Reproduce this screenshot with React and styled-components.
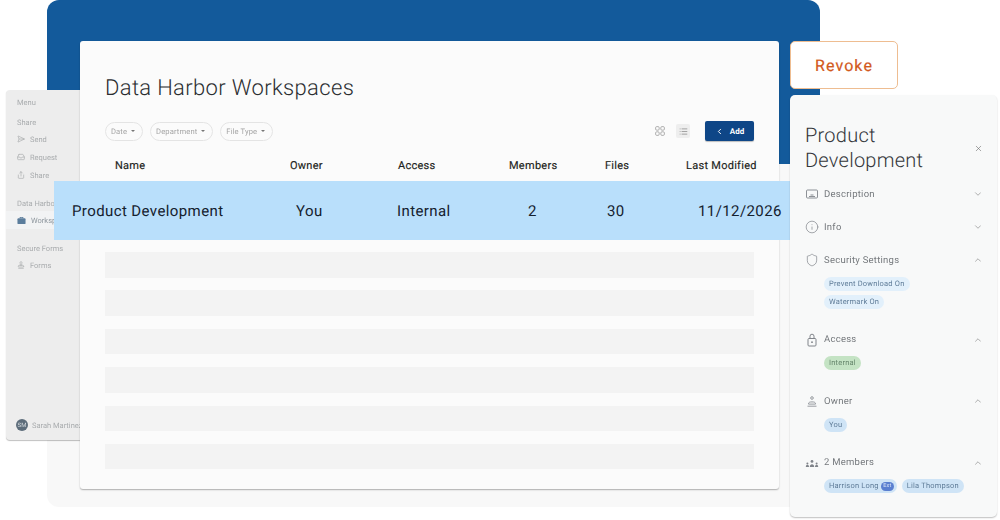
import React from "react";
import styled, { createGlobalStyle } from "styled-components";
import { ChevronDown, ChevronLeft, ChevronUp, Info, Inbox, List, SendHorizontal, Share, Shield, Stamp, X } from "lucide-react";

const Global = createGlobalStyle`
  html, body { margin: 0; padding: 0; background: #fff; }
  body { font-family: Roboto, "Liberation Sans", sans-serif; overflow: hidden; text-rendering: geometricPrecision; }
`;

const Canvas = styled.div`position: relative; width: 1000px; height: 520px; overflow: hidden; background: #fff;`;

const Backdrop = styled.div`
  position: absolute; left: 47px; top: 0; width: 773px; height: 507px;
  border-radius: 12px;
  background: linear-gradient(#135a9b 0, #135a9b 164px, #f8f8f8 164px);
`;

const Sidebar = styled.aside`
  position: absolute; left: 6px; top: 90px; width: 74px; height: 350px;
  display: flex; flex-direction: column;
  padding: 6px 0 9px 0; box-sizing: border-box;
  background: #ededed; border-radius: 4px 0 0 4px;
  box-shadow: 0 1px 1px rgba(0,0,0,.25);
  overflow: hidden; color: #a9acae; font-size: 7.5px; filter: blur(.35px);
`;
const SideHeading = styled.div`
  height: 14px; line-height: 14px; padding-left: 11px; white-space: nowrap;
  margin-top: ${p => p.$gap || 0}px;
`;
const SideItem = styled.div`
  height: 18px; display: flex; align-items: center; gap: 5px; padding-left: 11px;
  white-space: nowrap; background: ${p => (p.$active ? "#f2f3f4" : "transparent")};
  color: ${p => (p.$active ? "#8f979e" : "#a9acae")};
  svg { flex: none; }
`;
const SideFooter = styled.div`
  margin-top: auto; display: flex; align-items: center; gap: 4px; padding-left: 10px; white-space: nowrap;
`;
const Avatar = styled.span`
  width: 12px; height: 12px; flex: none; border-radius: 50%; background: #5d6d7b; color: #d5dade;
  font-size: 6px; display: flex; align-items: center; justify-content: center;
`;

const Card = styled.main`
  position: absolute; left: 80px; top: 41px; width: 699px; height: 448px;
  background: #fbfbfb; border-radius: 3px; box-sizing: border-box;
  box-shadow: 0 1px 1.5px rgba(0,0,0,.3);
  padding: 33px 25px 0 25px; display: flex; flex-direction: column;
`;
const Title = styled.h1`
  margin: 0; font-weight: 300; font-size: 22px; line-height: 30px; letter-spacing: .35px; color: #2b2e31;
`;
const Toolbar = styled.div`display: flex; align-items: center; gap: 7px; margin-top: 17px; height: 20px;`;
const Filter = styled.button`
  all: unset; display: flex; align-items: center; gap: 4px; box-sizing: border-box; height: 19px; padding: 0 7px 0 5px;
  border: 1px solid #e4e4e4; border-radius: 10px; font-size: 7.6px; color: #a5a5a5; letter-spacing: .12px; filter: blur(.2px);
  &::after { content: ""; border: 2.2px solid transparent; border-top: 2.5px solid #777; border-bottom: 0; }
`;
const Spacer = styled.div`flex: 1;`;
const ViewButton = styled.span`
  width: 14px; height: 14px; display: flex; align-items: center; justify-content: center; border-radius: 2px;
  color: ${p => (p.$on ? "#8a8a8a" : "#a8a8a8")}; background: ${p => (p.$on ? "#eeeeee" : "transparent")};
`;
const Views = styled.div`display: flex; gap: 9px; margin-right: 8px;`;
const AddButton = styled.button`
  all: unset; box-sizing: border-box; width: 49px; height: 20px; border-radius: 2px; background: #0e4687; color: #fff;
  display: flex; align-items: center; justify-content: center; gap: 6px; font-size: 8px; font-weight: 700;
  box-shadow: 0 1px 1px rgba(0,0,0,.25);
`;
const HeadRow = styled.div`
  display: grid; grid-template-columns: 175px 108px 111px 96px 81px auto; padding-left: 10px;
  margin-top: 14px; height: 20px; align-items: center; font-size: 11px; font-weight: 400; color: #1d1f21; letter-spacing: .27px;
  white-space: nowrap; -webkit-text-stroke: .15px #1d1f21;
`;
const Skeletons = styled.div`display: flex; flex-direction: column; gap: 12.9px; margin-top: 77px;`;
const Skeleton = styled.div`height: 25.5px; background: #f3f3f3;`;

const Highlight = styled.div`
  position: absolute; left: 54px; top: 181px; width: 736px; height: 59px; box-sizing: border-box;
  background: #b9dffb; padding-left: 18px; display: grid; align-items: center;
  grid-template-columns: 224px 101px 131px 79px 91px auto;
  font-size: 15px; letter-spacing: .4px; color: #15212e; white-space: nowrap;
`;

const RevokeButton = styled.button`
  all: unset; position: absolute; left: 790px; top: 41px; box-sizing: border-box; width: 108px; height: 48px;
  background: #fff; border: 1px solid #eebd91; border-radius: 5px; text-align: center;
  color: #d2591c; font-size: 16px; font-weight: 400; letter-spacing: 1.1px; -webkit-text-stroke: .2px #d2591c;
`;

const Panel = styled.aside`
  position: absolute; left: 790px; top: 95px; width: 207px; height: 422px; box-sizing: border-box;
  background: #f8f9f9; border-radius: 5px; box-shadow: 0 1px 1.5px rgba(0,0,0,.25);
  padding: 28px 14px 0 15px; display: flex; flex-direction: column;
`;
const PanelHead = styled.div`display: flex; align-items: center; justify-content: space-between; margin-bottom: 13px;`;
const PanelTitle = styled.h2`
  margin: 0; font-weight: 300; font-size: 20px; line-height: 25px; color: #33363a; letter-spacing: .25px; width: 140px;
`;
const Close = styled.span`display: flex; color: #666;`;
const Section = styled.section`margin-bottom: ${p => (p.$open ? 23 : 17)}px;`;
const SectionHead = styled.div`
  display: flex; align-items: center; height: 16px; font-size: 9.5px; color: #75797d; letter-spacing: .25px; filter: blur(.15px);
  svg.lead { flex: none; width: 14px; height: 14px; margin-right: 5px; color: #80848a; }
  svg.chev { margin-left: auto; color: #a0a0a0; }
`;
const Chips = styled.div`
  display: flex; flex-wrap: wrap; gap: 4px 5px; margin: 8.5px 0 0 19px; align-items: flex-start;
  flex-direction: ${p => (p.$column ? "column" : "row")};
`;
const Chip = styled.span`
  height: 14px; line-height: 14px; padding: 0 5px; border-radius: 7px; font-size: 7.5px; letter-spacing: .2px; white-space: nowrap;
  display: inline-flex; align-items: center; filter: blur(.15px);
  background: ${p => ({ pale: "#e2f0fb", green: "#c4e3c4", blue: "#cfe4f6" }[p.$tone])};
  color: ${p => (p.$tone === "green" ? "#66866c" : "#5f7c98")};
`;
const Ext = styled.span`
  background: #5a7fd0; color: #dbe6f7; border-radius: 5px; font-size: 5.5px; width: 13px; text-align: center; height: 9px; line-height: 9px;
  margin: 0 -2px 0 0;
`;

const DescIcon = () => (
  <svg className="lead" viewBox="0 0 14 14" fill="none" stroke="currentColor" strokeWidth=".9">
    <rect x="1.5" y="3" width="11" height="8" rx="1" /><path d="M5.5 8h3M4 9.500h6" />
  </svg>
);
const LockIcon = () => (
  <svg className="lead" viewBox="0 0 14 14" fill="none" stroke="currentColor" strokeWidth="1">
    <rect x="3" y="5.500" width="8" height="7.500" rx="1" /><path d="M5 5.500V3.200a2 2 0 0 1 4 0v2.300" />
    <circle cx="7" cy="9.200" r=".9" fill="currentColor" stroke="none" />
  </svg>
);
const OwnerIcon = () => (
  <svg className="lead" viewBox="0 0 14 14" fill="none" stroke="currentColor" strokeWidth=".8">
    <circle cx="7" cy="4" r="1.300" /><path d="M3.500 9.700c0-1.200 1-1.800 3.500-1.800s3.500.6 3.500 1.800v.4h-7zM2.500 12.200h9" />
  </svg>
);
const MembersIcon = () => (
  <svg className="lead" viewBox="0 0 14 14" fill="currentColor">
    <circle cx="7" cy="5.400" r="1.400" /><path d="M4.800 11c0-1.800 1-2.800 2.200-2.800s2.200 1 2.200 2.800z" />
    <circle cx="2.400" cy="7.400" r="1" /><path d="M.8 11c0-1.400.7-2.200 1.600-2.200S4 9.600 4 11z" />
    <circle cx="11.600" cy="7.400" r="1" /><path d="M10 11c0-1.400.7-2.200 1.600-2.200s1.600.8 1.600 2.200z" />
  </svg>
);
const BriefIcon = () => (
  <svg width="9" height="9" viewBox="0 0 10 10" fill="#5b7d9c">
    <rect x=".5" y="2.500" width="9" height="6.500" rx="1" /><path d="M3 2.500V1h4v1.500H6V2H4v.5z" />
  </svg>
);
const GridIcon = () => (
  <svg width="10" height="10" viewBox="0 0 10 10" fill="none" stroke="currentColor" strokeWidth=".9">
    <rect x=".6" y=".6" width="3.600" height="3.600" rx="1.200" /><rect x="5.800" y=".6" width="3.600" height="3.600" rx="1.200" />
    <rect x=".6" y="5.800" width="3.600" height="3.600" rx="1.200" /><rect x="5.800" y="5.800" width="3.600" height="3.600" rx="1.200" />
  </svg>
);

const head = ["Name", "Owner", "Access", "Members", "Files", "Last Modified"];
const row = ["Product Development", "You", "Internal", "2", "30", "11/12/2026"];

export default function App() {
  return (
    <Canvas>
      <Global />
      <Backdrop />
      <Sidebar>
        <SideHeading>Menu</SideHeading>
        <SideHeading $gap={6}>Share</SideHeading>
        <SideItem><SendHorizontal size={8} />Send</SideItem>
        <SideItem><Inbox size={8} />Request</SideItem>
        <SideItem><Share size={8} />Share</SideItem>
        <SideHeading $gap={13}>Data Harbor Workspaces</SideHeading>
        <SideItem $active><BriefIcon />Workspaces</SideItem>
        <SideHeading $gap={13}>Secure Forms</SideHeading>
        <SideItem><Stamp size={8} />Forms</SideItem>
        <SideFooter><Avatar>SM</Avatar>Sarah Martinez</SideFooter>
      </Sidebar>
      <Card>
        <Title>Data Harbor Workspaces</Title>
        <Toolbar>
          <Filter>Date</Filter>
          <Filter>Department</Filter>
          <Filter>File Type</Filter>
          <Spacer />
          <Views>
            <ViewButton><GridIcon /></ViewButton>
            <ViewButton $on><List size={9} strokeWidth={2} /></ViewButton>
          </Views>
          <AddButton><ChevronLeft size={9} strokeWidth={2.5} />Add</AddButton>
        </Toolbar>
        <HeadRow>{head.map(h => <span key={h}>{h}</span>)}</HeadRow>
        <Skeletons>{[0, 1, 2, 3, 4, 5].map(i => <Skeleton key={i} />)}</Skeletons>
      </Card>
      <Highlight>{row.map(c => <span key={c}>{c}</span>)}</Highlight>
      <RevokeButton>Revoke</RevokeButton>
      <Panel>
        <PanelHead>
          <PanelTitle>Product Development</PanelTitle>
          <Close><X size={9} strokeWidth={1.5} /></Close>
        </PanelHead>
        <Section>
          <SectionHead><DescIcon />Description<ChevronDown className="chev" size={10} /></SectionHead>
        </Section>
        <Section>
          <SectionHead><Info className="lead" strokeWidth={1.2} />Info<ChevronDown className="chev" size={10} /></SectionHead>
        </Section>
        <Section $open>
          <SectionHead><Shield className="lead" strokeWidth={1.2} />Security Settings<ChevronUp className="chev" size={10} /></SectionHead>
          <Chips $column>
            <Chip $tone="pale">Prevent Download On</Chip>
            <Chip $tone="pale">Watermark On</Chip>
          </Chips>
        </Section>
        <Section $open>
          <SectionHead><LockIcon />Access<ChevronUp className="chev" size={10} /></SectionHead>
          <Chips><Chip $tone="green">Internal</Chip></Chips>
        </Section>
        <Section $open>
          <SectionHead><OwnerIcon />Owner<ChevronUp className="chev" size={10} /></SectionHead>
          <Chips><Chip $tone="blue">You</Chip></Chips>
        </Section>
        <Section $open>
          <SectionHead><MembersIcon />2 Members<ChevronUp className="chev" size={10} /></SectionHead>
          <Chips>
            <Chip $tone="blue">Harrison Long&nbsp;<Ext>Ext</Ext></Chip>
            <Chip $tone="blue">Lila Thompson</Chip>
          </Chips>
        </Section>
      </Panel>
    </Canvas>
  );
}
